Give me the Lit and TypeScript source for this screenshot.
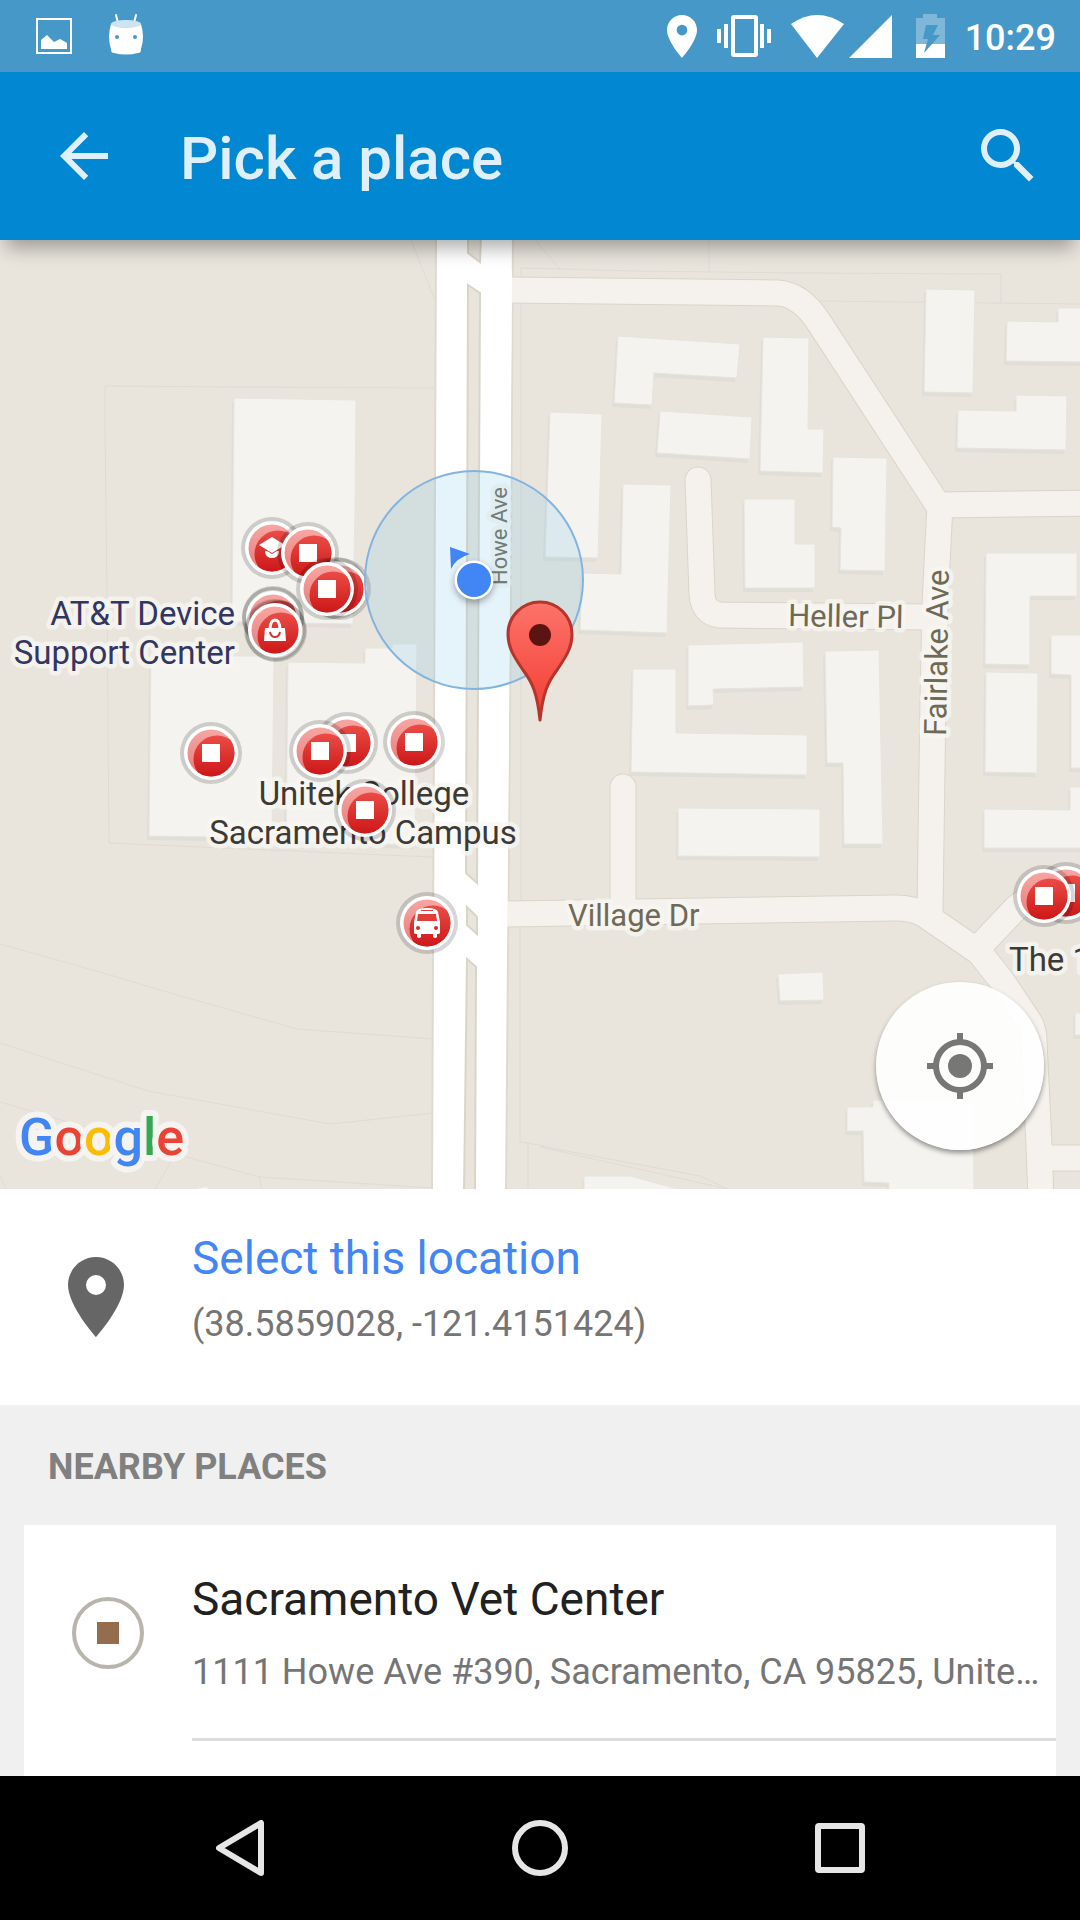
import { LitElement, html, svg, css } from "lit";
import { customElement, property, state } from "lit/decorators.js";

type Glyph = "square" | "school" | "bag" | "bus" | "none";

interface Place {
  name: string;
  address: string;
}

/* ---------- Map geometry (map units, origin at the map's top left) ---------- */

const PARCELS = [
  "M434 148 244 147 105 146 105 184 107 360 109 603 200 607 432 617",
  "M411 0 434 58",
  "M535 0 560 29 M521 62V28L560 29 635 31 800 33 1001 34V63",
  "M709 0V31 M820 61 1080 64",
  "M521 63V660 M520 688V902L545 906",
  "M0 704 100 732 160 750 297 789 434 799",
  "M0 803 148 851 330 884 434 873",
  "M0 862 180 915 259 937 434 948 M259 937 262 949",
  "M0 936 6 949 M155 949 175 915 M528 902V949",
  "M540 906 700 936 728 949 M540 907 728 949",
];

const BUILDINGS = [
  "234,158 356,160 355,266 353,384 232,382",
  "151,416 274,416 272,598 149,596",
  "288,422 365,423 365,408 392,408 392,404 417,404 415,605 286,601",
  "618,96 740,104 737,138 654,133 652,165 614,163",
  "660,171 752,177 750,219 657,213",
  "763,97 809,98 808,189 824,189 823,233 760,231",
  "550,172 602,174 598,318 545,317",
  "623,244 671,245 667,393 580,390 582,333 621,334",
  "744,259 795,259 795,304 815,304 815,348 745,348",
  "833,217 887,218 885,331 840,330 841,288 832,287",
  "926,49 975,50 973,153 924,152",
  "1007,81 1058,82 1058,68 1084,68 1084,122 1006,121",
  "958,170 1016,171 1016,155 1067,156 1066,210 957,208",
  "986,313 1077,313 1077,356 1030,356 1030,425 985,424",
  "986,432 1038,433 1037,533 985,532",
  "1051,395 1084,395 1084,528 1071,528 1071,435 1051,434",
  "688,405 803,402 804,447 713,449 714,465 688,466",
  "633,429 676,429 676,493 807,495 807,535 631,532",
  "825,411 879,410 883,604 844,604 843,523 827,523",
  "678,568 820,569 820,617 678,616",
  "984,569 1070,570 1070,547 1084,547 1084,608 984,608",
  "778,734 823,732 824,760 780,761",
  "847,867 873,867 873,860 973,860 974,952 889,952 889,943 864,942 863,891 847,891",
  "584,936 630,936 678,949 584,952",
  "1075,773 1084,773 1084,795 1075,795",
  "193,949 208,946 208,952",
];

const STREETS = [
  "M505 50 778 53C796 54 810 68 820 84L938 265",
  "M938 265 1090 263",
  "M940 264 935 364 933 460 930 670",
  "M698 240 702 354Q703 373 720 375L935 377",
  "M623 547V672",
  "M500 674 895 668Q914 668 925 675L976 710",
  "M980 706 1016 668 1050 644",
  "M976 708 1002 741 1028 780Q1034 788 1034 802L1039 905 1041 960",
  "M1041 918H1090",
];

const MEDIANS = [
  "468,-4 481,-4 480,22 468,13",
  "468,45 480,53 477,643 466,633",
  "467,667 477,677 477,694 467,685",
  "467,719 476,727 475,953 464,953",
];

const MARKERS: { x: number; y: number; glyph: Glyph }[] = [
  { x: 272, y: 308, glyph: "school" },
  { x: 308, y: 313, glyph: "square" },
  { x: 336, y: 348, glyph: "none" },
  { x: 340, y: 349, glyph: "none" },
  { x: 327, y: 349, glyph: "square" },
  { x: 273, y: 377, glyph: "none" },
  { x: 273, y: 378, glyph: "none" },
  { x: 276, y: 391, glyph: "none" },
  { x: 275, y: 390, glyph: "bag" },
  { x: 211, y: 513, glyph: "square" },
  { x: 347, y: 503, glyph: "square" },
  { x: 320, y: 511, glyph: "square" },
  { x: 414, y: 502, glyph: "square" },
  { x: 365, y: 570, glyph: "square" },
  { x: 427, y: 683, glyph: "bus" },
  { x: 1066, y: 653, glyph: "square" },
  { x: 1044, y: 656, glyph: "square" },
];

const glyphShape = (glyph: Glyph) => {
  switch (glyph) {
    case "square":
      return svg`<rect x="-9" y="-9" width="18" height="18" fill="#fff"/>`;
    case "school":
      return svg`<path fill="#fff" d="M-13-3 0-11 13-3 0 5ZM-7 4Q-7 2-5 3L0 6 5 3Q7 2 7 4 6 10 0 10-6 10-7 4Z"/>`;
    case "bag":
      return svg`
        <path fill="none" stroke="#fff" stroke-width="3" d="M-5 0Q-5-10 0-10T5 0"/>
        <path fill="#fff" d="M-10-2H10L11 11H-11Z"/>
        <path fill="none" stroke="#d93030" stroke-width="2" d="M-5 2Q-4 7 0 7T5 2"/>`;
    case "bus":
      return svg`
        <path fill="#fff" d="M-13-1-11-11Q-10-15 0-15T11-11L13-1V10Q13 11 10 11V14Q8 16 6 14V11H-6V14Q-8 16-10 14V11Q-13 11-13 10Z"/>
        <path fill="#e23d38" d="M-9-9H9L10-2H-10ZM-6-13H6V-12H-6Z"/>
        <circle cx="-9" cy="5" r="2" fill="#d62626"/><circle cx="9" cy="5" r="2" fill="#d62626"/>`;
    default:
      return svg``;
  }
};

@customElement("place-map")
export class PlaceMap extends LitElement {
  static styles = css`
    :host {
      display: block;
      position: relative;
      overflow: hidden;
    }
    .canvas {
      display: block;
      width: 100%;
      height: auto;
      background: #e9e5dd;
      font-family: Roboto, "Liberation Sans", sans-serif;
    }
    .parcel {
      fill: none;
      stroke: #dfdbd5;
      stroke-width: 1;
    }
    .shade {
      fill: #e0ded6;
    }
    .building {
      fill: #f4f3ef;
      stroke: #e6e4dd;
      stroke-width: 1;
    }
    .casing,
    .street {
      fill: none;
      stroke-linejoin: round;
      stroke-linecap: round;
    }
    .casing {
      stroke: #dad5c9;
      stroke-width: 27;
    }
    .street {
      stroke: #f5f2ed;
      stroke-width: 25;
    }
    .avenue {
      fill: #fff;
      stroke: #dedacd;
      stroke-width: 2;
    }
    .median {
      fill: #e9e5dd;
      stroke: #dad5c9;
      stroke-width: 2;
    }
    .label {
      font-size: 33px;
      paint-order: stroke;
      stroke: rgba(248, 247, 243, 0.75);
      stroke-width: 9px;
      stroke-linejoin: round;
    }
    .poi {
      fill: #3d3935;
    }
    .shop {
      fill: #333660;
      text-anchor: end;
    }
    .road {
      fill: #6f6a55;
      font-size: 31px;
    }
    .small {
      font-size: 22px;
    }
    .middle {
      text-anchor: middle;
    }
    .brand {
      font-size: 52px;
      font-weight: 500;
      paint-order: stroke;
      stroke: #f6f4f0;
      stroke-width: 12px;
      stroke-linejoin: round;
    }
    .locate {
      position: absolute;
      right: 36px;
      bottom: 39px;
      width: 168px;
      height: 168px;
      padding: 0;
      border: 0;
      border-radius: 50%;
      display: grid;
      place-items: center;
      background: rgba(255, 255, 255, 0.9);
      box-shadow: 0 3px 5px rgba(0, 0, 0, 0.4);
    }
  `;

  private marker(x: number, y: number, glyph: Glyph) {
    return svg`<g transform=${`translate(${x} ${y})`}>
      <circle r="31" fill="rgba(0,0,0,.16)"/>
      <circle r="27" fill="#fff"/>
      <circle r="23.5" fill="url(#sheen)"/>
      <g clip-path="url(#disc)"><circle cx="6" cy="6" r="23.5" fill="url(#red)"/></g>
      ${glyphShape(glyph)}
    </g>`;
  }

  render() {
    return html`
      <svg class="canvas" viewBox="0 0 1080 949" role="img" aria-label="Map">
        <defs>
          <linearGradient id="red" gradientUnits="userSpaceOnUse" x1="0" y1="-20" x2="0" y2="24">
            <stop offset="0" stop-color="#ec4f49" /><stop offset="1" stop-color="#cc1717" />
          </linearGradient>
          <linearGradient id="sheen" x1="0" y1="0" x2="0" y2="1">
            <stop offset="0" stop-color="#f7a6a2" /><stop offset="1" stop-color="#e57c7a" />
          </linearGradient>
          <linearGradient id="drop" x1="0" y1="0" x2="0" y2="1">
            <stop offset="0" stop-color="#fd7369" /><stop offset="1" stop-color="#f23c32" />
          </linearGradient>
          <clipPath id="disc"><circle r="23.5" /></clipPath>
          <filter id="soft" x="-50%" y="-50%" width="200%" height="200%"><feGaussianBlur stdDeviation="3" /></filter>
        </defs>

        ${PARCELS.map((d) => svg`<path class="parcel" d=${d}/>`)}
        ${BUILDINGS.map(
          (p) => svg`<polygon class="shade" points=${p} transform="translate(-2 4)"/>
            <polygon class="building" points=${p}/>`
        )}
        ${STREETS.map((d) => svg`<path class="casing" d=${d}/>`)}
        <polygon class="avenue" points="436,-4 513,-4 510,480 506,953 432,953 434,480" />
        ${STREETS.map((d) => svg`<path class="street" d=${d}/>`)}
        <polygon fill="#fff" points="482,30 512,30 509,480 507,700 480,700" />
        ${MEDIANS.map((p) => svg`<polygon class="median" points=${p}/>`)}

        <text class="label shop" x="235" y="385">AT&amp;T Device</text>
        <text class="label shop" x="235" y="424">Support Center</text>
        <text class="label poi middle" x="364" y="565">Unitek College</text>
        <text class="label poi middle" x="363" y="604">Sacramento Campus</text>
        <text class="label poi" x="1009" y="731">The 1151</text>
        <text class="label road" x="568" y="686">Village Dr</text>
        <text class="label road" transform="translate(788 386) rotate(1)">Heller Pl</text>
        <text class="label road" transform="translate(946 496) rotate(-89)">Fairlake Ave</text>
        <text class="label road small" transform="translate(507 345) rotate(-90)">Howe Ave</text>

        ${MARKERS.map((m) => this.marker(m.x, m.y, m.glyph))}

        <circle cx="474" cy="340" r="109" fill="rgba(125,195,235,.2)" stroke="#82b4e2" stroke-width="2" />
        <path fill="#4285f4" d="M450 307 470 314Q456 318 451 329Z" />
        <circle cx="474" cy="343" r="20" fill="rgba(0,0,0,.3)" filter="url(#soft)" />
        <circle cx="474" cy="340" r="19.5" fill="#fff" />
        <circle cx="474" cy="340" r="17" fill="#4285f4" />

        <path
          fill="url(#drop)"
          stroke="#b5352c"
          stroke-width="3"
          stroke-linejoin="round"
          d="M540 480C537 452 532 442 523 430C512 414 508 406 508 394A32 32 0 0 1 572 394C572 406 568 414 557 430C548 442 543 452 540 480Z"
        />
        <circle cx="540" cy="395" r="11" fill="#5c1412" />

        <text class="brand" x="19" y="915"
          ><tspan fill="#4285f4">G</tspan><tspan fill="#ea4335">o</tspan><tspan fill="#fbbc05">o</tspan
          ><tspan fill="#4285f4">g</tspan><tspan fill="#34a853">l</tspan><tspan fill="#ea4335">e</tspan></text
        >
      </svg>
      <button class="locate" aria-label="My location">
        <svg width="72" height="72" viewBox="0 0 24 24" fill="#777875">
          <circle cx="12" cy="12" r="4" />
          <path
            d="M20.94 11A8.99 8.99 0 0 0 13 3.06V1h-2v2.06A8.99 8.99 0 0 0 3.06 11H1v2h2.06A8.99 8.99 0 0 0 11 20.94V23h2v-2.06A8.99 8.99 0 0 0 20.94 13H23v-2h-2.06zM12 19a7 7 0 1 1 0-14 7 7 0 0 1 0 14z"
          />
        </svg>
      </button>
    `;
  }
}

@customElement("status-bar")
export class StatusBar extends LitElement {
  @property() time = "";

  static styles = css`
    :host {
      display: flex;
      justify-content: space-between;
      align-items: center;
      height: 72px;
      padding: 0 24px 0 36px;
      background: #4698c9;
      color: #fff;
      font-size: 36px;
      font-weight: 500;
      line-height: 48px;
    }
    .group {
      display: flex;
      align-items: center;
      gap: 20px;
    }
    .notices {
      gap: 36px;
    }
    .signal {
      gap: 5px;
      padding-right: 4px;
    }
    svg {
      display: block;
    }
    .clock {
      padding-top: 3px;
    }
  `;

  render() {
    return html`
      <div class="group notices">
        <svg width="36" height="36" viewBox="0 0 36 36" aria-hidden="true">
          <rect x="1" y="1" width="34" height="34" fill="none" stroke="#fff" stroke-width="2" />
          <path fill="#fff" d="M5 31V22L11 17 18 24 24 21 31 25V31Z" />
        </svg>
        <svg width="36" height="48" viewBox="0 0 36 48" aria-hidden="true">
          <path stroke="#fff" stroke-width="2" stroke-linecap="round" d="M8 3 10 11M28 3 26 11" />
          <path
            fill="#fff"
            d="M3 12Q18 19 33 12Q37 25 33 37C33 40 32 41 30 41Q18 44 6 41C4 41 3 40 3 37Q-1 25 3 12Z"
          />
          <ellipse cx="18" cy="12" rx="15" ry="4" fill="#cfe4f1" />
          <circle cx="9" cy="25" r="2" fill="#4698c9" /><circle cx="27" cy="25" r="2" fill="#4698c9" />
        </svg>
      </div>
      <div class="group">
        <svg width="30" height="43" viewBox="5 2 14 20" aria-hidden="true">
          <path
            fill="#fff"
            d="M12 2C8.13 2 5 5.13 5 9c0 5.25 7 13 7 13s7-7.75 7-13c0-3.87-3.13-7-7-7zm0 9.5a2.5 2.5 0 1 1 0-5 2.5 2.5 0 0 1 0 5z"
          />
        </svg>
        <svg width="54" height="42" viewBox="0 0 54 42" fill="#fff" aria-hidden="true">
          <path d="M0 14H4V28H0ZM7 9H11V33H7ZM43 9H47V33H43ZM50 14H54V28H50Z" />
          <rect x="16" y="2" width="23" height="38" rx="1" fill="none" stroke="#fff" stroke-width="4" />
        </svg>
        <div class="group signal">
          <svg width="53" height="43" viewBox="0 0 53 43" aria-hidden="true">
            <path fill="#fff" d="M26 43 0 9Q26-9 53 9Z" />
          </svg>
          <svg width="43" height="43" viewBox="0 0 43 43" aria-hidden="true">
            <path fill="#fff" d="M43 0V43H0Z" />
          </svg>
        </div>
        <svg width="29" height="44" viewBox="0 0 29 44" aria-hidden="true">
          <path fill="#7fb7d9" d="M7 0H21V4H29V31H0V4H7Z" />
          <path fill="#fff" d="M0 30H29V44H0Z" />
          <path fill="#4698c9" d="M10 11H22L17 21H24L8 39 12 25H7Z" />
        </svg>
        <span class="clock">${this.time}</span>
      </div>
    `;
  }
}

@customElement("app-root")
export class AppRoot extends LitElement {
  @state() private coords = { lat: 38.5859028, lng: -121.4151424 };
  @state() private places: Place[] = [
    {
      name: "Sacramento Vet Center",
      address: "1111 Howe Ave #390, Sacramento, CA 95825, United States",
    },
  ];

  static styles = css`
    :host {
      display: flex;
      flex-direction: column;
      height: 100vh;
      overflow: hidden;
      background: #f0f0f0;
      font-family: Roboto, "Liberation Sans", sans-serif;
    }
    button {
      margin: 0;
      padding: 0;
      border: 0;
      background: none;
      color: inherit;
      font: inherit;
      text-align: left;
    }
    svg {
      display: block;
    }
    h1,
    h2,
    ul {
      margin: 0;
      padding: 0;
      list-style: none;
    }
    status-bar,
    .toolbar,
    place-map,
    .select,
    .navbar {
      flex: none;
    }
    .toolbar {
      position: relative;
      z-index: 1;
      display: flex;
      align-items: center;
      gap: 60px;
      height: 168px;
      padding: 0 36px 0 48px;
      box-sizing: border-box;
      background: #0288d3;
      color: #dff0fa;
      box-shadow: 0 14px 18px -6px rgba(0, 0, 0, 0.32);
    }
    .title {
      flex: 1;
      padding-top: 5px;
      font-size: 60px;
      font-weight: 500;
      line-height: 72px;
    }
    .row {
      display: grid;
      grid-template-columns: 96px minmax(0, 1fr);
      column-gap: 48px;
      width: 100%;
      min-height: 216px;
      box-sizing: border-box;
    }
    .icon {
      align-self: center;
      justify-self: end;
    }
    .text {
      display: flex;
      flex-direction: column;
    }
    .primary {
      font-size: 46px;
      line-height: 64px;
    }
    .secondary {
      overflow: hidden;
      font-size: 36px;
      line-height: 48px;
      color: #757575;
      text-overflow: ellipsis;
      white-space: nowrap;
    }
    .select {
      padding: 0 48px;
      background: #fff;
    }
    .select .text {
      gap: 10px;
      padding-top: 37px;
    }
    .select .primary {
      color: #4285f4;
    }
    .results {
      flex: 1;
      min-height: 0;
      display: flex;
      flex-direction: column;
      padding: 0 24px;
      overflow: hidden;
    }
    .heading {
      flex: none;
      padding: 38px 24px 34px;
      color: #808080;
      font-size: 36px;
      font-weight: 700;
      line-height: 48px;
    }
    .card {
      flex: 1;
      background: #fff;
    }
    .place {
      padding-left: 24px;
    }
    .place .text {
      gap: 17px;
      padding: 42px 8px 0 0;
      border-bottom: 3px solid #dcdcdc;
    }
    .place .primary {
      color: #212121;
    }
    .badge {
      display: grid;
      place-items: center;
      width: 64px;
      height: 64px;
      border: 4px solid #b8b5ad;
      border-radius: 50%;
    }
    .badge::before {
      content: "";
      width: 22px;
      height: 22px;
      background: #956c4c;
    }
    .navbar {
      display: flex;
      height: 144px;
      padding: 0 90px;
      background: #000;
    }
    .key {
      flex: 1;
      display: grid;
      place-items: center;
    }
  `;

  render() {
    return html`
      <status-bar time="10:29"></status-bar>
      <header class="toolbar">
        <button aria-label="Back">
          <svg width="72" height="72" viewBox="0 0 24 24" fill="currentColor">
            <path d="M20 11H7.83l5.59-5.59L12 4l-8 8 8 8 1.41-1.41L7.83 13H20v-2z" />
          </svg>
        </button>
        <h1 class="title">Pick a place</h1>
        <button aria-label="Search">
          <svg width="72" height="72" viewBox="0 0 24 24" fill="currentColor">
            <path
              d="M15.5 14h-.79l-.28-.27A6.471 6.471 0 0 0 16 9.5 6.5 6.5 0 1 0 9.5 16c1.61 0 3.09-.59 4.23-1.57l.27.28v.79l5 4.99L20.49 19l-4.99-5zm-6 0a4.5 4.5 0 1 1 0-9 4.5 4.5 0 0 1 0 9z"
            />
          </svg>
        </button>
      </header>
      <place-map></place-map>
      <button class="row select">
        <svg class="icon" width="96" height="96" viewBox="0 0 24 24" fill="#666" aria-hidden="true">
          <path
            d="M12 2C8.13 2 5 5.13 5 9c0 5.25 7 13 7 13s7-7.75 7-13c0-3.87-3.13-7-7-7zm0 9.5a2.5 2.5 0 1 1 0-5 2.5 2.5 0 0 1 0 5z"
          />
        </svg>
        <span class="text">
          <span class="primary">Select this location</span>
          <span class="secondary">(${this.coords.lat}, ${this.coords.lng})</span>
        </span>
      </button>
      <section class="results">
        <h2 class="heading">NEARBY PLACES</h2>
        <ul class="card">
          ${this.places.map(
            (place) => html`<li>
              <button class="row place">
                <span class="icon badge"></span>
                <span class="text">
                  <span class="primary">${place.name}</span>
                  <span class="secondary">${place.address}</span>
                </span>
              </button>
            </li>`
          )}
        </ul>
      </section>
      <nav class="navbar">
        <button class="key" aria-label="Navigate back">
          <svg width="48" height="56" viewBox="0 0 48 56">
            <path fill="none" stroke="#e6e6e6" stroke-width="6" stroke-linejoin="round" d="M45 3V53L3 28Z" />
          </svg>
        </button>
        <button class="key" aria-label="Home">
          <svg width="56" height="56" viewBox="0 0 56 56">
            <circle cx="28" cy="28" r="25" fill="none" stroke="#e6e6e6" stroke-width="6" />
          </svg>
        </button>
        <button class="key" aria-label="Overview">
          <svg width="50" height="50" viewBox="0 0 50 50">
            <rect x="3" y="3" width="44" height="44" rx="1" fill="none" stroke="#e6e6e6" stroke-width="6" />
          </svg>
        </button>
      </nav>
    `;
  }
}
